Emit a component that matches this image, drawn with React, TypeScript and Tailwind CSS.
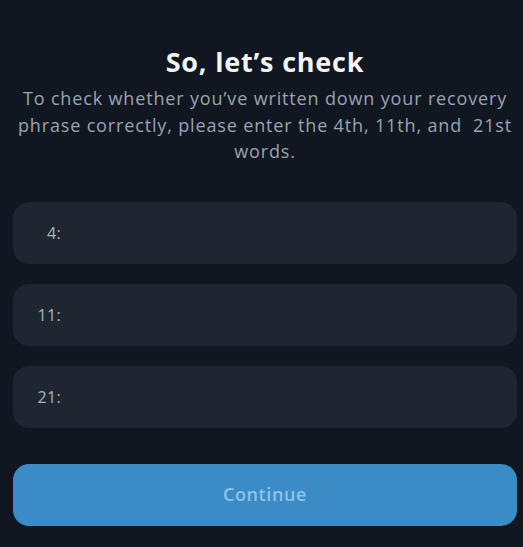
import React from 'react';

const font = { fontFamily: '"Open Sans", "Noto Sans", sans-serif' };

function WordField({ n }: { n: number }) {
  return (
    <label className="flex h-[62px] items-center rounded-2xl bg-[#1e2632] px-[14px]">
      <span className="w-[34px] text-right text-[16px] tracking-[0.3px] text-[#aab2bf]">{n}:</span>
      <input className="ml-2 flex-1 bg-transparent text-[16px] text-white outline-none" />
    </label>
  );
}

export default function App() {
  return (
    <div className="min-h-[547px] bg-[#111720] pl-[13px] pr-[6px] pt-[44px]" style={font}>
      <h1 className="text-center text-[27px] font-bold leading-9 tracking-[0.8px] text-[#f3f4f6]">So, let’s check</h1>
      <p className="mt-[5px] text-center text-[18px] leading-[26.5px] tracking-[0.85px] text-[#9aa3b0]">
        To check whether you’ve written down your recovery
        <br />
        phrase correctly, please enter the 4th, 11th, and&nbsp; 21st
        <br />
        words.
      </p>

      <div className="mt-[37px] flex flex-col gap-5">
        <WordField n={4} />
        <WordField n={11} />
        <WordField n={21} />
      </div>

      <button className="mt-9 h-[62px] w-full rounded-2xl bg-[#3a8bc6] text-[18px] font-semibold tracking-[0.6px] text-[#8fc3e8]">
        Continue
      </button>
    </div>
  );
}
